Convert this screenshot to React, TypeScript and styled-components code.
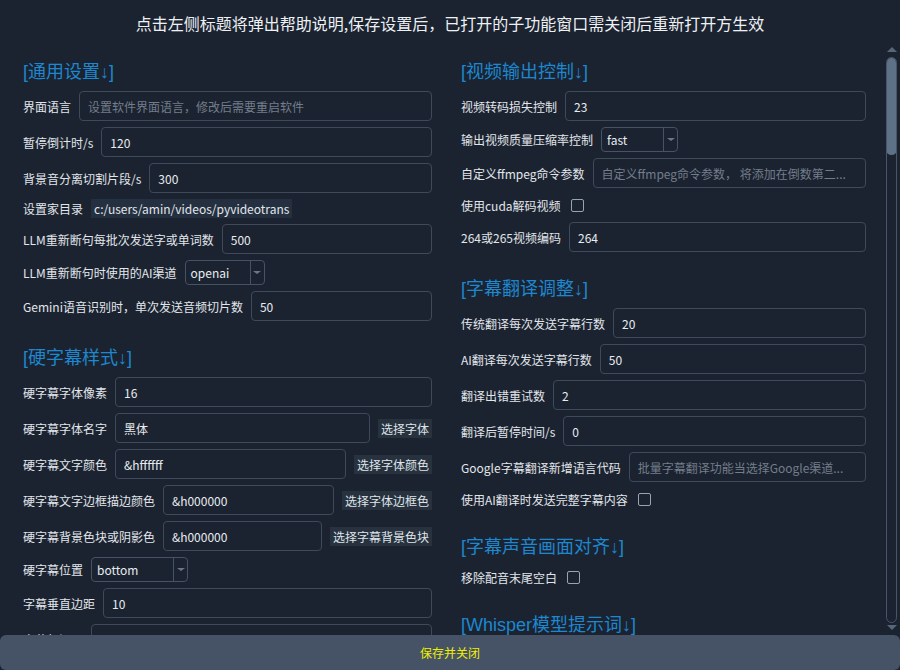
import styled, { createGlobalStyle } from 'styled-components';

const GlobalStyle = createGlobalStyle`
  html, body {
    margin: 0;
    padding: 0;
    background: #1b2330;
  }
  body {
    font-family: "Noto Sans CJK SC", "Noto Sans", sans-serif;
  }
`;

const Window = styled.div`
  width: 900px;
  height: 670px;
  display: flex;
  flex-direction: column;
  background: #1b2330;
  color: #e2e6eb;
  overflow: hidden;
`;

const Notice = styled.div`
  height: 45px;
  flex: none;
  display: flex;
  align-items: center;
  justify-content: center;
  font-size: 16px;
  color: #eef1f4;
`;

const Body = styled.div`
  flex: 1;
  display: flex;
  min-height: 0;
  overflow: hidden;
`;

const Content = styled.div`
  flex: 1;
  display: grid;
  grid-template-columns: 409px 405px;
  column-gap: 29px;
  align-items: start;
  padding: 15px 0 0 23px;
  overflow: hidden;
`;

const Column = styled.div`
  display: flex;
  flex-direction: column;
  gap: 25px;
`;

const Section = styled.section`
  display: flex;
  flex-direction: column;
`;

const Heading = styled.h2`
  margin: 0 0 7px;
  font-family: "Liberation Sans", "Noto Sans CJK SC", sans-serif;
  font-size: 18px;
  font-weight: 400;
  line-height: 24px;
  color: #1d87cf;
  cursor: pointer;
`;

const Rows = styled.div`
  display: flex;
  flex-direction: column;
  gap: 6px;
`;

const Row = styled.div<{ $gap?: number }>`
  display: flex;
  align-items: center;
  gap: ${({ $gap }) => $gap ?? 8}px;
  min-height: 19px;
`;

const Label = styled.span`
  flex: none;
  font-size: 12px;
  white-space: nowrap;
  color: #e2e6eb;
`;

const TextInput = styled.input`
  flex: 1;
  min-width: 0;
  height: 30px;
  box-sizing: border-box;
  padding: 0 8px;
  border: 1px solid #3e4959;
  border-radius: 4px;
  background: transparent;
  color: #e8ecf0;
  font-family: inherit;
  font-size: 12px;
  outline: none;

  &::placeholder {
    color: #737d8b;
  }
`;

const PickButton = styled.button`
  flex: none;
  height: 19px;
  padding: 0 3px;
  border: none;
  background: #28323e;
  color: #dfe4ea;
  font-family: inherit;
  font-size: 12px;
  line-height: 19px;
`;

const PathBox = styled.span`
  height: 19px;
  padding: 0 3px;
  background: #243040;
  font-size: 12px;
  line-height: 19px;
  color: #e2e6eb;
`;

const Combo = styled.div<{ $width: number }>`
  width: ${({ $width }) => $width}px;
  height: 25px;
  box-sizing: border-box;
  display: flex;
  border: 1px solid #465265;
  border-radius: 4px;
  font-size: 12px;
`;

const ComboText = styled.span`
  flex: 1;
  padding-left: 5px;
  line-height: 23px;
  color: #e8ecf0;
`;

const ComboDrop = styled.span`
  width: 13px;
  border-left: 1px solid #465265;
  display: flex;
  align-items: center;
  justify-content: center;

  &::after {
    content: '';
    border-left: 4px solid transparent;
    border-right: 4px solid transparent;
    border-top: 3px solid #6b7788;
  }
`;

const CheckRow = styled(Row)`
  height: 22px;
`;

const Check = styled.span`
  width: 13px;
  height: 13px;
  box-sizing: border-box;
  border: 1px solid #9aa3ae;
  border-radius: 2px;
`;

const ScrollBar = styled.div`
  flex: none;
  width: 13px;
  margin-right: 2px;
  display: flex;
  flex-direction: column;
  align-items: center;
  padding-top: 2px;
`;

const Arrow = styled.span<{ $down?: boolean }>`
  width: 0;
  height: 0;
  border-left: 5px solid transparent;
  border-right: 5px solid transparent;
  ${({ $down }) =>
    $down ? 'border-top: 5px solid #596678;' : 'border-bottom: 5px solid #596678;'}
`;

const Track = styled.div`
  width: 11px;
  height: 566px;
  margin: 5px 0 2px;
  box-sizing: border-box;
  border: 1px solid #4a5668;
  border-radius: 6px;
  overflow: hidden;
`;

const Thumb = styled.div`
  height: 98px;
  margin: -1px;
  border-radius: 6px;
  background: #5d7287;
`;

const SaveButton = styled.button`
  flex: none;
  height: 35px;
  border: none;
  border-radius: 6px;
  background: #465366;
  color: #f0f000;
  font-family: inherit;
  font-size: 12px;
`;

type Field =
  | { kind: 'input'; label: string; value?: string; placeholder?: string; pick?: string }
  | { kind: 'combo'; label: string; value: string; width: number }
  | { kind: 'check'; label: string }
  | { kind: 'path'; label: string; value: string };

interface Group {
  title: string;
  fields: Field[];
}

const leftGroups: Group[] = [
  {
    title: '[通用设置↓]',
    fields: [
      { kind: 'input', label: '界面语言', placeholder: '设置软件界面语言，修改后需要重启软件' },
      { kind: 'input', label: '暂停倒计时/s', value: '120' },
      { kind: 'input', label: '背景音分离切割片段/s', value: '300' },
      { kind: 'path', label: '设置家目录', value: 'c:/users/amin/videos/pyvideotrans' },
      { kind: 'input', label: 'LLM重新断句每批次发送字或单词数', value: '500' },
      { kind: 'combo', label: 'LLM重新断句时使用的AI渠道', value: 'openai', width: 80 },
      { kind: 'input', label: 'Gemini语音识别时，单次发送音频切片数', value: '50' },
    ],
  },
  {
    title: '[硬字幕样式↓]',
    fields: [
      { kind: 'input', label: '硬字幕字体像素', value: '16' },
      { kind: 'input', label: '硬字幕字体名字', value: '黑体', pick: '选择字体' },
      { kind: 'input', label: '硬字幕文字颜色', value: '&hffffff', pick: '选择字体颜色' },
      { kind: 'input', label: '硬字幕文字边框描边颜色', value: '&h000000', pick: '选择字体边框色' },
      { kind: 'input', label: '硬字幕背景色块或阴影色', value: '&h000000', pick: '选择字幕背景色块' },
      { kind: 'combo', label: '硬字幕位置', value: 'bottom', width: 97 },
      { kind: 'input', label: '字幕垂直边距', value: '10' },
      { kind: 'input', label: '字幕行间距', value: '0' },
    ],
  },
];

const rightGroups: Group[] = [
  {
    title: '[视频输出控制↓]',
    fields: [
      { kind: 'input', label: '视频转码损失控制', value: '23' },
      { kind: 'combo', label: '输出视频质量压缩率控制', value: 'fast', width: 77 },
      { kind: 'input', label: '自定义ffmpeg命令参数', placeholder: '自定义ffmpeg命令参数， 将添加在倒数第二...' },
      { kind: 'check', label: '使用cuda解码视频' },
      { kind: 'input', label: '264或265视频编码', value: '264' },
    ],
  },
  {
    title: '[字幕翻译调整↓]',
    fields: [
      { kind: 'input', label: '传统翻译每次发送字幕行数', value: '20' },
      { kind: 'input', label: 'AI翻译每次发送字幕行数', value: '50' },
      { kind: 'input', label: '翻译出错重试数', value: '2' },
      { kind: 'input', label: '翻译后暂停时间/s', value: '0' },
      { kind: 'input', label: 'Google字幕翻译新增语言代码', placeholder: '批量字幕翻译功能当选择Google渠道...' },
      { kind: 'check', label: '使用AI翻译时发送完整字幕内容' },
    ],
  },
  {
    title: '[字幕声音画面对齐↓]',
    fields: [{ kind: 'check', label: '移除配音末尾空白' }],
  },
  {
    title: '[Whisper模型提示词↓]',
    fields: [],
  },
];

const FieldRow = ({ field }: { field: Field }) => {
  switch (field.kind) {
    case 'check':
      return (
        <CheckRow $gap={10}>
          <Label>{field.label}</Label>
          <Check />
        </CheckRow>
      );
    case 'path':
      return (
        <Row>
          <Label>{field.label}</Label>
          <PathBox>{field.value}</PathBox>
        </Row>
      );
    case 'combo':
      return (
        <Row>
          <Label>{field.label}</Label>
          <Combo $width={field.width}>
            <ComboText>{field.value}</ComboText>
            <ComboDrop />
          </Combo>
        </Row>
      );
    default:
      return (
        <Row>
          <Label>{field.label}</Label>
          <TextInput readOnly defaultValue={field.value} placeholder={field.placeholder} />
          {field.pick && <PickButton>{field.pick}</PickButton>}
        </Row>
      );
  }
};

const SettingsColumn = ({ groups }: { groups: Group[] }) => (
  <Column>
    {groups.map((group) => (
      <Section key={group.title}>
        <Heading>{group.title}</Heading>
        {group.fields.length > 0 && (
          <Rows>
            {group.fields.map((field) => (
              <FieldRow key={field.label} field={field} />
            ))}
          </Rows>
        )}
      </Section>
    ))}
  </Column>
);

export default function App() {
  return (
    <Window>
      <GlobalStyle />
      <Notice>点击左侧标题将弹出帮助说明,保存设置后，已打开的子功能窗口需关闭后重新打开方生效</Notice>
      <Body>
        <Content>
          <SettingsColumn groups={leftGroups} />
          <SettingsColumn groups={rightGroups} />
        </Content>
        <ScrollBar>
          <Arrow />
          <Track>
            <Thumb />
          </Track>
          <Arrow $down />
        </ScrollBar>
      </Body>
      <SaveButton>保存并关闭</SaveButton>
    </Window>
  );
}
